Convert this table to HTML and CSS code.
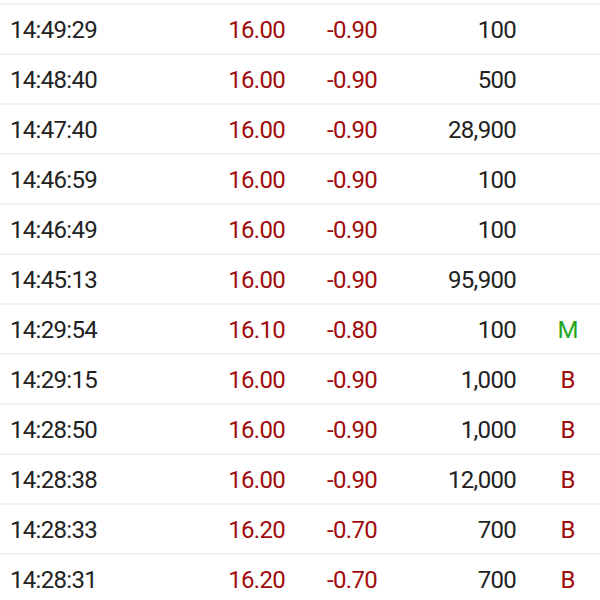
FILE: index.html
```html
<!DOCTYPE html>
<html lang="en">
<head>
  <meta charset="UTF-8" />
  <meta name="viewport" content="width=device-width, initial-scale=1" />
  <title>Trades</title>
  <link rel="stylesheet" href="styles.css">
</head>
<body>
  <div class="trades">
    <div class="row"><span class="time">14:49:29</span><span class="price">16.00</span><span class="change">-0.90</span><span class="vol">100</span><span class="flag"></span></div>
    <div class="row"><span class="time">14:48:40</span><span class="price">16.00</span><span class="change">-0.90</span><span class="vol">500</span><span class="flag"></span></div>
    <div class="row"><span class="time">14:47:40</span><span class="price">16.00</span><span class="change">-0.90</span><span class="vol">28,900</span><span class="flag"></span></div>
    <div class="row"><span class="time">14:46:59</span><span class="price">16.00</span><span class="change">-0.90</span><span class="vol">100</span><span class="flag"></span></div>
    <div class="row"><span class="time">14:46:49</span><span class="price">16.00</span><span class="change">-0.90</span><span class="vol">100</span><span class="flag"></span></div>
    <div class="row"><span class="time">14:45:13</span><span class="price">16.00</span><span class="change">-0.90</span><span class="vol">95,900</span><span class="flag"></span></div>
    <div class="row"><span class="time">14:29:54</span><span class="price">16.10</span><span class="change">-0.80</span><span class="vol">100</span><span class="flag mid">M</span></div>
    <div class="row"><span class="time">14:29:15</span><span class="price">16.00</span><span class="change">-0.90</span><span class="vol">1,000</span><span class="flag buy">B</span></div>
    <div class="row"><span class="time">14:28:50</span><span class="price">16.00</span><span class="change">-0.90</span><span class="vol">1,000</span><span class="flag buy">B</span></div>
    <div class="row"><span class="time">14:28:38</span><span class="price">16.00</span><span class="change">-0.90</span><span class="vol">12,000</span><span class="flag buy">B</span></div>
    <div class="row"><span class="time">14:28:33</span><span class="price">16.20</span><span class="change">-0.70</span><span class="vol">700</span><span class="flag buy">B</span></div>
    <div class="row"><span class="time">14:28:31</span><span class="price">16.20</span><span class="change">-0.70</span><span class="vol">700</span><span class="flag buy">B</span></div>
  </div>
</body>
</html>
```

FILE: styles.css
```css
* {
  box-sizing: border-box;
}
body {
  margin: 0;
  background: #ffffff;
  font-family: Roboto, "Noto Sans", sans-serif;
  color: #222222;
}
.trades {
  margin-top: 3px;
  border-top: 2px solid #f2f2f2;
}
.row {
  display: grid;
  grid-template-columns: 190px 85px 92px 139px 1fr;
  align-items: center;
  height: 50px;
  padding-left: 10px;
  padding-top: 2px;
  border-bottom: 2px solid #f2f2f2;
  font-size: 24px;
  letter-spacing: -0.7px;
}
.price,
.change,
.vol {
  text-align: right;
}
.price,
.change {
  color: #a00c0c;
}
.flag {
  text-align: center;
  padding-left: 20px;
  letter-spacing: 0;
}
.flag.buy {
  color: #a00c0c;
}
.flag.mid {
  color: #1fa51f;
}
```
